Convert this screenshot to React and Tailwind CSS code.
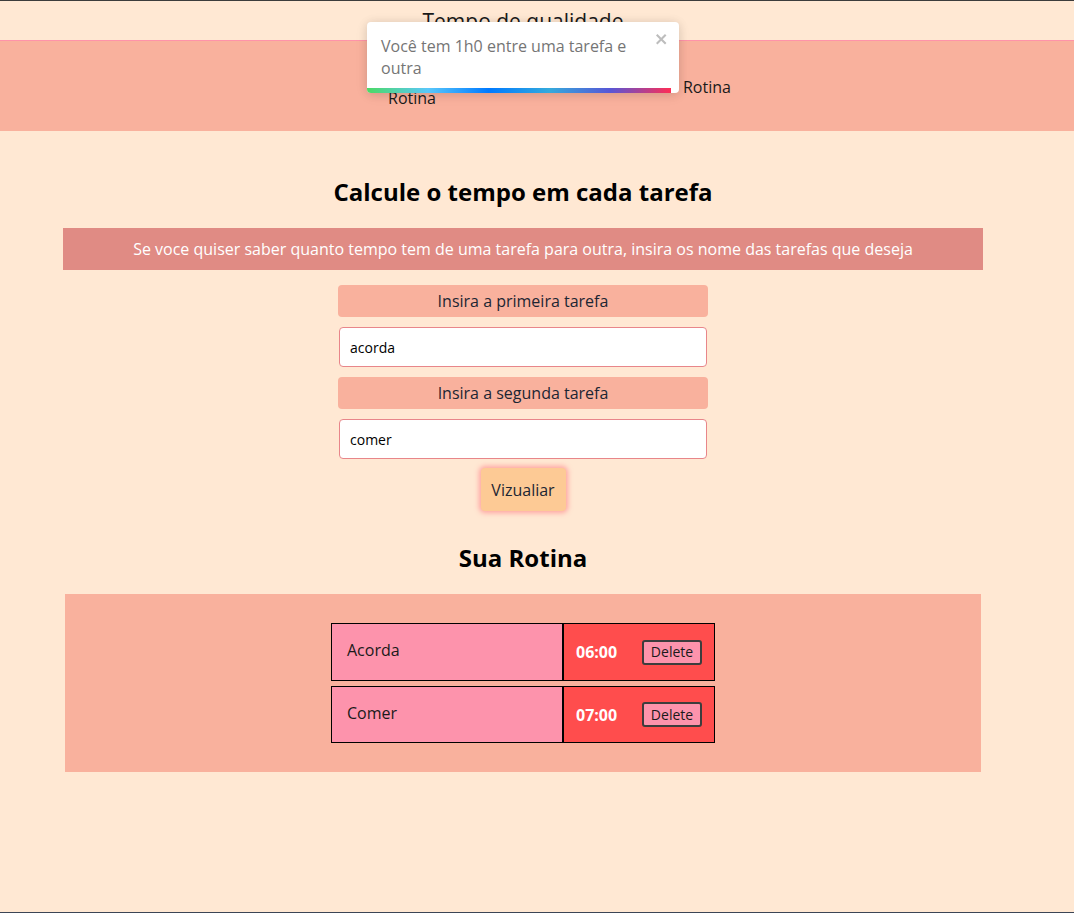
import React from "react";

const rotina = [
  { nome: "Acorda", hora: "06:00" },
  { nome: "Comer", hora: "07:00" },
];

function Toast() {
  return (
    <div className="absolute left-[367px] top-[21px] w-[312px] h-[71px] bg-white rounded-[4px] overflow-hidden shadow-[0_1px_10px_rgba(0,0,0,0.12),0_2px_15px_rgba(0,0,0,0.06)]">
      <div className="flex justify-between pl-[14px] pr-[10px] pt-[13px]">
        <p className="w-[268px] text-[16px] leading-[22px] text-[#757575]">
          Você tem 1h0 entre uma tarefa e outra
        </p>
        <svg viewBox="0 0 14 16" className="w-[14px] h-[16px] mt-[-4px] fill-[#bdbdbd]">
          <path d="M7.71 8.23l3.75 3.75-1.48 1.48-3.75-3.75-3.75 3.75L1 11.98l3.75-3.75L1 4.48 2.48 3l3.75 3.75L9.98 3l1.48 1.48-3.75 3.75z" />
        </svg>
      </div>
      <div className="absolute left-0 bottom-0 h-[5px] w-[304px] bg-[linear-gradient(to_right,#4cd964,#5ac8fa,#007aff,#34aadc,#5856d6,#ff2d55)]" />
    </div>
  );
}

export default function App() {
  return (
    <div
      className="relative min-h-[913px] bg-[#ffe8d3] border-t border-t-[#3c3c3c] border-b border-b-[#3b4556] text-[#212529]"
      style={{ fontFamily: '"Open Sans", sans-serif' }}
    >
      <header className="h-[39px] w-[1046px] flex justify-center pt-[6px]">
        <h1 className="text-[21px] leading-[28px] text-[#1a1a1a]">Tempo de qualidade</h1>
      </header>
      <nav className="h-[91px] bg-[#f9b19d] border-t border-t-[#ff93a9] flex pl-[388px] gap-[247px] text-[16px] leading-[24px] text-[#1a1a1a]">
        <span className="mt-[45px]">Rotina</span>
        <span className="mt-[34px]">Rotina</span>
      </nav>

      <main className="w-[1046px] flex flex-col items-center">
        <h2 className="mt-[45px] text-[24px] leading-[32px] font-bold text-black">
          Calcule o tempo em cada tarefa
        </h2>
        <div className="mt-[20px] w-[920px] h-[42px] bg-[#e08b84] flex items-center justify-center text-white text-[16px]">
          Se voce quiser saber quanto tempo tem de uma tarefa para outra, insira os nome das tarefas que deseja
        </div>

        <div className="mt-[15px] w-[370px] flex flex-col gap-[10px]">
          <label className="h-[32px] bg-[#f9b19d] rounded-[4px] flex items-center justify-center text-[16px] text-[#1c2633]">
            Insira a primeira tarefa
          </label>
          <input
            readOnly
            value="acorda"
            className="mx-[1px] h-[40px] bg-white border border-[#e8868a] rounded-[4px] pl-[10px] text-[14px] text-black outline-none"
          />
          <label className="h-[32px] bg-[#f9b19d] rounded-[4px] flex items-center justify-center text-[16px] text-[#1c2633]">
            Insira a segunda tarefa
          </label>
          <input
            readOnly
            value="comer"
            className="mx-[1px] h-[40px] bg-white border border-[#e8868a] rounded-[4px] pl-[10px] text-[14px] text-black outline-none"
          />
        </div>

        <button className="mt-[9px] w-[85px] h-[43px] bg-[#fdca95] rounded-[4px] text-[16px] text-[#1c2633] shadow-[0_0_5px_2px_rgba(255,110,120,0.55)]">
          Vizualiar
        </button>

        <h2 className="mt-[31px] text-[24px] leading-[32px] font-bold text-black">Sua Rotina</h2>

        <section className="mt-[20px] w-[916px] bg-[#f9b19d] pt-[29px] pb-[29px] flex flex-col items-center gap-[5px]">
          {rotina.map((item) => (
            <div key={item.nome} className="flex w-[384px] h-[58px] last:h-[57px]">
              <div className="w-[232px] bg-[#fd93ac] border border-black pl-[15px] pt-[14px] text-[16px] text-[#1a1a1a]">
                {item.nome}
              </div>
              <div className="w-[152px] bg-[#ff4d4d] border border-black flex items-center pl-[12px] pr-[12px] justify-between">
                <span className="text-white font-bold text-[16px]">{item.hora}</span>
                <button className="w-[60px] h-[25px] bg-[#fd93ac] border-2 border-[#3d3d3d] rounded-[3px] text-[14px] leading-[20px] text-[#1a1a1a]">
                  Delete
                </button>
              </div>
            </div>
          ))}
        </section>
      </main>

      <Toast />
    </div>
  );
}
